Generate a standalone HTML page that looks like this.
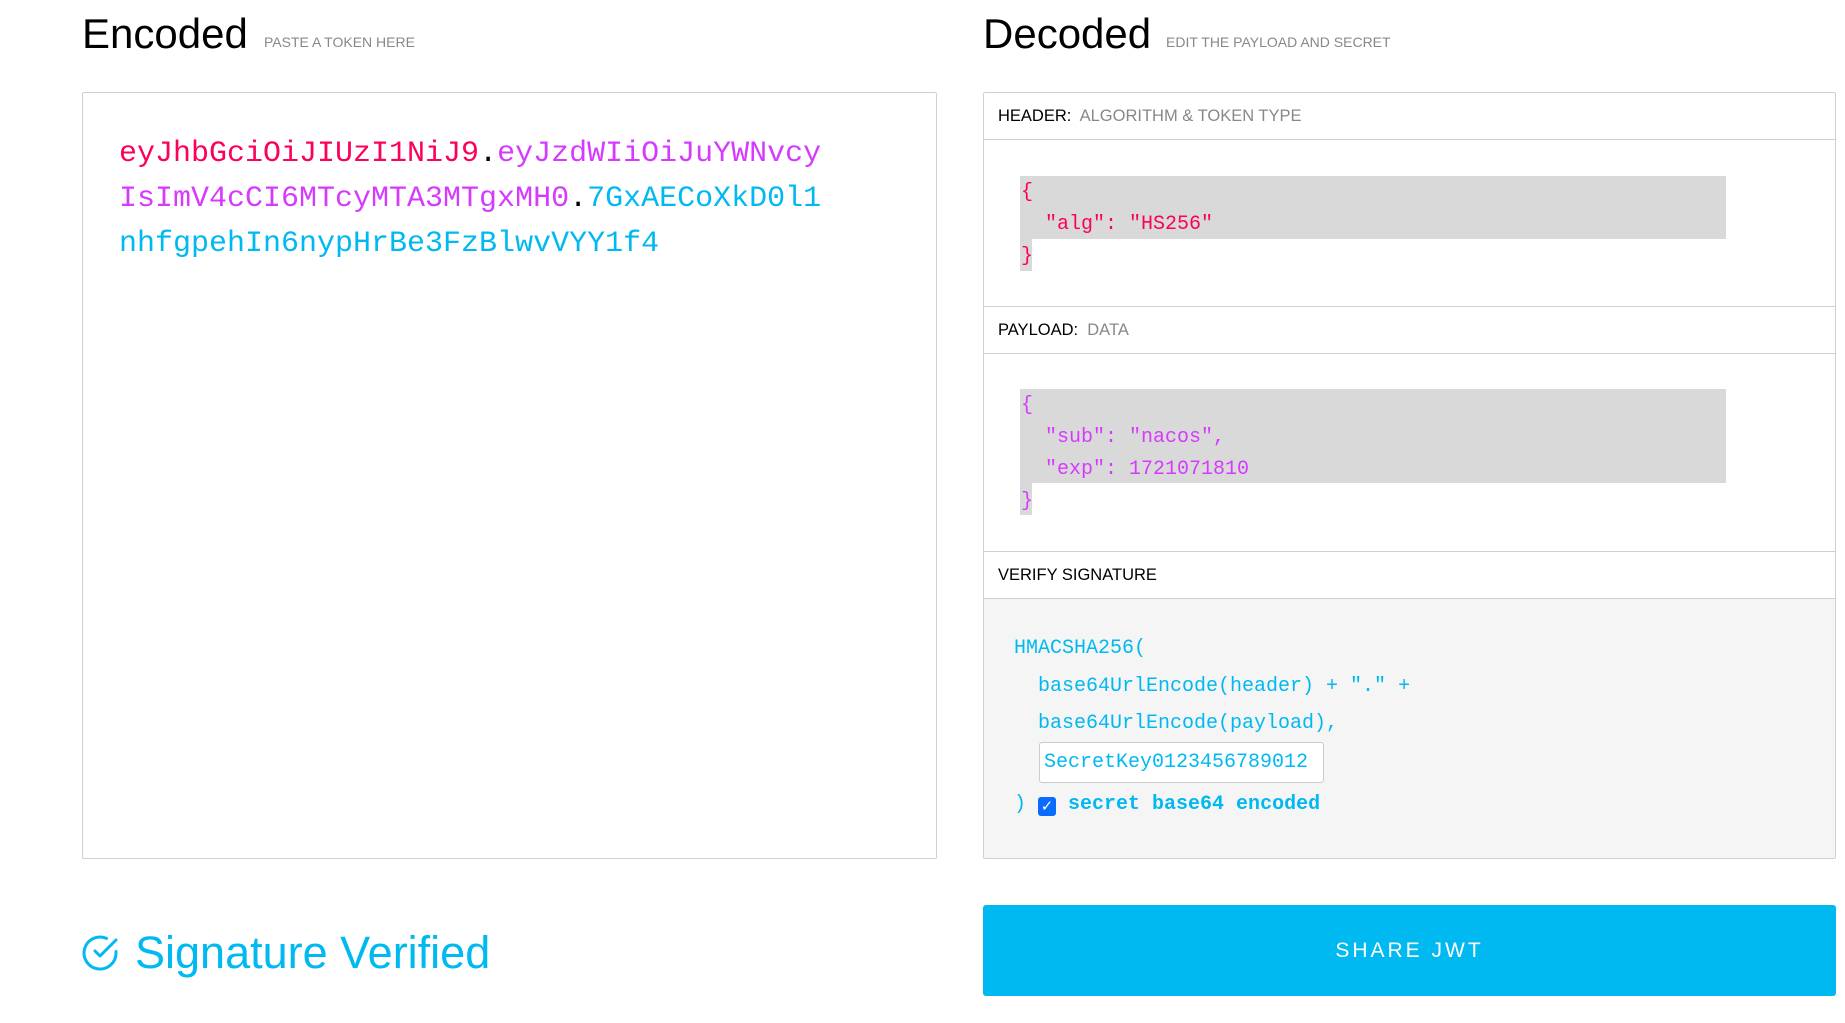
<!DOCTYPE html>
<html><head><meta charset="utf-8"><style>
body{margin:0;width:1845px;height:1023px;background:#fff;font-family:"Liberation Sans",sans-serif;position:relative;overflow:hidden}
.a{position:absolute;white-space:nowrap}
.h1{font-size:42px;color:#000;line-height:1}
.sub{font-size:14px;color:#888;line-height:1}
.mono{font-family:"Liberation Mono",monospace}
.box{position:absolute;border:1px solid #d0d0d0;border-radius:2px;box-sizing:border-box}
.row{position:absolute;left:0;right:0;border-bottom:1px solid #d0d0d0;box-sizing:border-box;font-size:16.5px;padding-left:14px;line-height:46px;color:#000}
.row span{color:#888}
.code{font-size:20px;line-height:32px}
.r{color:#fb015b}.p{color:#d63aff}.c{color:#00b9f1}
</style></head><body>
<div class="a h1" style="left:82px;top:13px">Encoded</div>
<div class="a sub" style="left:264px;top:35px">PASTE A TOKEN HERE</div>
<div class="a h1" style="left:983px;top:13px">Decoded</div>
<div class="a sub" style="left:1166px;top:35px">EDIT THE PAYLOAD AND SECRET</div>

<div class="box" style="left:82px;top:92px;width:855px;height:767px"></div>
<div class="a mono" style="left:119px;top:132px;font-size:30px;line-height:45px">
<span class="r">eyJhbGciOiJIUzI1NiJ9</span>.<span class="p">eyJzdWIiOiJuYWNvcy</span><br>
<span class="p">IsImV4cCI6MTcyMTA3MTgxMH0</span>.<span class="c">7GxAECoXkD0l1</span><br>
<span class="c">nhfgpehIn6nypHrBe3FzBlwvVYY1f4</span></div>

<div class="box" style="left:983px;top:92px;width:853px;height:767px;overflow:hidden">
<div class="row" style="top:0;height:47px">HEADER:&nbsp; <span>ALGORITHM &amp; TOKEN TYPE</span></div>
<div class="row" style="top:213px;height:48px;border-top:1px solid #d0d0d0">PAYLOAD:&nbsp; <span>DATA</span></div>
<div class="row" style="top:458px;height:48px;border-top:1px solid #d0d0d0">VERIFY SIGNATURE</div>
<div style="position:absolute;left:0;right:0;top:506px;bottom:0;background:#f5f5f5"></div>
<div style="position:absolute;left:36px;top:83px;width:706px;height:63px;background:#d9d9d9"></div>
<div style="position:absolute;left:36px;top:146px;width:12px;height:32px;background:#d9d9d9"></div>
<div class="a mono code r" style="left:37px;top:84px">{<br>&nbsp;&nbsp;"alg": "HS256"<br>}</div>
<div style="position:absolute;left:36px;top:296px;width:706px;height:94px;background:#d9d9d9"></div>
<div class="a" style="left:36px;top:390px;width:12px;height:32px;background:#d9d9d9"></div>
<div class="a mono code p" style="left:37px;top:297px">{<br>&nbsp;&nbsp;"sub": "nacos",<br>&nbsp;&nbsp;"exp": 1721071810<br>}</div>
<div class="a mono c" style="left:30px;top:537px;font-size:20px;line-height:37.6px">HMACSHA256(<br>&nbsp;&nbsp;base64UrlEncode(header) + "." +<br>&nbsp;&nbsp;base64UrlEncode(payload),</div>
<div class="a mono c" style="left:55px;top:649px;width:285px;height:41px;background:#fff;border:1px solid #ccc;border-radius:3px;box-sizing:border-box;font-size:20px;line-height:39px;padding-left:4px">SecretKey0123456789012</div>
<div class="a mono c" style="left:30px;top:697px;font-size:20px;line-height:30px">) <span style="display:inline-block;width:18px;height:19px;background:#0a6cff;border-radius:3px;color:#fff;font-size:15px;line-height:19px;text-align:center;vertical-align:-2px;font-family:'DejaVu Sans'">✓</span> <b>secret base64 encoded</b></div>
</div>

<div class="a" style="left:983px;top:905px;width:853px;height:91px;background:#00b9f1;border-radius:3px;color:#fff;font-size:21px;letter-spacing:3px;text-align:center;line-height:91px">SHARE JWT</div>

<svg class="a" style="left:80px;top:933px" width="40" height="40" viewBox="0 0 40 40"><path d="M36 18.5V20a16 16 0 1 1-9.5-14.6" fill="none" stroke="#00b9f1" stroke-width="3" stroke-linecap="round"/><path d="M36 7L20 23l-5-5" fill="none" stroke="#00b9f1" stroke-width="3" stroke-linecap="round" stroke-linejoin="round"/></svg>
<div class="a" style="left:135px;top:930px;font-size:45px;color:#00b9f1;line-height:1">Signature Verified</div>
</body></html>
